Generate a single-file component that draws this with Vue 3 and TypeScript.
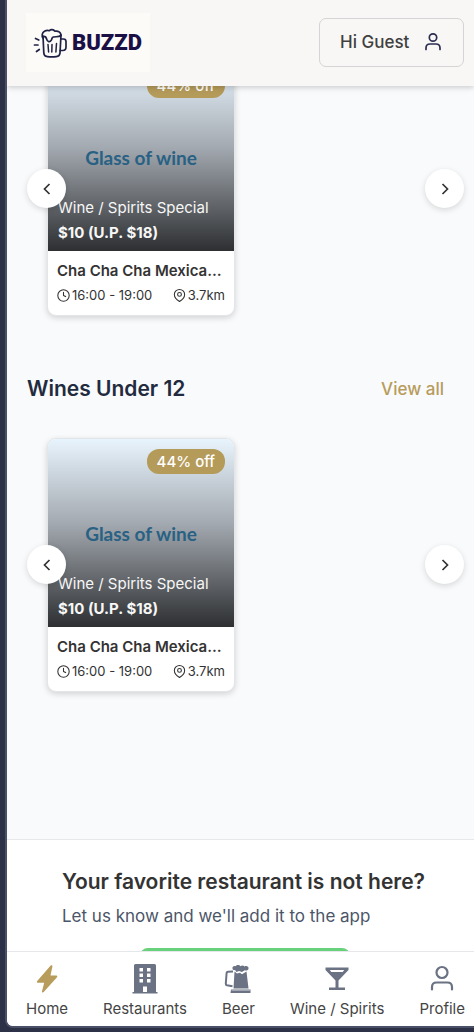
<script setup lang="ts">
interface Offer {
  drink: string
  category: string
  price: string
  discount: string
  venue: string
  hours: string
  distance: string
}

interface Section {
  id: string
  title: string
  offers: Offer[]
}

const wineOffer: Offer = {
  drink: 'Glass of wine',
  category: 'Wine / Spirits Special',
  price: '$10 (U.P. $18)',
  discount: '44% off',
  venue: 'Cha Cha Cha Mexican Restaurant',
  hours: '16:00 - 19:00',
  distance: '3.7km',
}

const sections: Section[] = [
  { id: 'featured', title: '', offers: [wineOffer] },
  { id: 'wines', title: 'Wines Under 12', offers: [wineOffer] },
]

const tabs = [
  { id: 'home', label: 'Home' },
  { id: 'restaurants', label: 'Restaurants' },
  { id: 'beer', label: 'Beer' },
  { id: 'wine', label: 'Wine / Spirits' },
  { id: 'profile', label: 'Profile' },
]
</script>

<template>
  <div class="device">
    <div class="screen">
      <header class="topbar">
        <a class="logo" href="#" aria-label="Buzzd">
          <svg width="36" height="34" viewBox="0 0 36 34" fill="none" stroke="#1f2145" stroke-width="1.700" stroke-linecap="round" stroke-linejoin="round" aria-hidden="true">
            <path d="M10 10 10.800 27c.2 2.500 1.200 3.500 3.500 3.700 3 .3 6 .3 9 0 2.300-.2 3.500-1.200 3.700-3.700L28 9" />
            <path d="M10 12c-1.500-2-1-5.500 1.500-6.800 2-1 3.500-.9 4.800-.5 1.500-1.700 4.200-1.500 5.700.5 3-.6 5.500.6 6 3.800" />
            <path d="M10 10.500c2-.3 3.200.7 3.700 2.700.5 2.800 3.300 3.300 4.600 1 .7-1.300.4-2.700 2-3.200 2.500-.6 5.700.3 7.700-1.500" />
            <path d="M27.800 13h2.700c1.700 0 2.500.9 2.500 2.600v5.400c0 2.300-1.300 3.500-3.300 3.500h-2.500" />
            <path d="M15 18.500l.6 7.500M19 18.500l-.2 7.500M23.500 17.500l-.6 8.500" stroke-width="1.500" />
            <path d="M2.500 12.500l3.300 1.500M1.500 19h3.500M3.500 25.500l2.800-2" stroke-width="1.700" />
          </svg>
          <span class="logo-text">BUZZD</span>
        </a>
        <button class="guest" type="button">
          <span>Hi Guest</span>
          <svg width="18" height="20" viewBox="0 0 18 20" fill="none" stroke="#2b2d50" stroke-width="1.700" aria-hidden="true">
            <circle cx="9" cy="5.500" r="3.700" />
            <path d="M2 17.500v-1.500c0-2.500 1.500-4 4-4h6c2.500 0 4 1.500 4 4v1.500" stroke-linecap="round" />
          </svg>
        </button>
      </header>

      <main class="feed">
        <section v-for="section in sections" :key="section.id" class="section">
          <div v-if="section.title" class="section-head">
            <h2>{{ section.title }}</h2>
            <a href="#">View all</a>
          </div>
          <div class="carousel">
            <article v-for="offer in section.offers" :key="offer.drink" class="card">
              <div class="photo">
                <span class="badge">{{ offer.discount }}</span>
                <strong class="drink">{{ offer.drink }}</strong>
                <div class="caption">
                  <span>{{ offer.category }}</span>
                  <b>{{ offer.price }}</b>
                </div>
              </div>
              <div class="info">
                <h3>{{ offer.venue }}</h3>
                <div class="meta">
                  <span>
                    <svg width="13" height="13" viewBox="0 0 24 24" fill="none" stroke="currentColor" stroke-width="2" stroke-linecap="round" stroke-linejoin="round" aria-hidden="true">
                      <circle cx="12" cy="12" r="10.500" />
                      <path d="M12 6v6l4 2" />
                    </svg>
                    {{ offer.hours }}
                  </span>
                  <span>
                    <svg width="13" height="13" viewBox="0 0 24 24" fill="none" stroke="currentColor" stroke-width="2" stroke-linejoin="round" aria-hidden="true">
                      <path d="M21.500 10c0 7-9.500 13-9.500 13s-9.500-6-9.500-13a9.500 9 0 0 1 19 0z" />
                      <circle cx="12" cy="10" r="3.500" />
                    </svg>
                    {{ offer.distance }}
                  </span>
                </div>
              </div>
            </article>
            <button class="arrow prev" type="button" aria-label="Previous">
              <svg width="16" height="16" viewBox="0 0 16 16" fill="none" stroke="currentColor" stroke-width="1.700" aria-hidden="true"><path d="M10.500 3 5.500 8l5 5" /></svg>
            </button>
            <button class="arrow next" type="button" aria-label="Next">
              <svg width="16" height="16" viewBox="0 0 16 16" fill="none" stroke="currentColor" stroke-width="1.700" aria-hidden="true"><path d="M5.500 3l5 5-5 5" /></svg>
            </button>
          </div>
        </section>

        <section class="suggest">
          <h2>Your favorite restaurant is not here?</h2>
          <p>Let us know and we'll add it to the app</p>
          <button class="suggest-button" type="button" aria-label="Suggest a restaurant"></button>
        </section>
      </main>

      <nav class="tabs">
        <a v-for="tab in tabs" :key="tab.id" href="#" :class="{ active: tab.id === 'home' }">
          <svg v-if="tab.id === 'home'" width="32" height="32" viewBox="0 0 32 32" fill="currentColor" aria-hidden="true">
            <path d="M19.700 2.500 6.200 18c-.6.8-.3 1.800.7 1.800h6.300L11 28.200c-.2 1.200.9 1.700 1.700.8L26 14.200c.6-.8.3-1.700-.7-1.700h-5.800l1.900-9c.2-1.200-.9-1.800-1.700-1z" />
          </svg>
          <svg v-else-if="tab.id === 'restaurants'" width="32" height="32" viewBox="0 0 32 32" fill="currentColor" fill-rule="evenodd" aria-hidden="true">
            <path d="M5 2.500Q5 1 6.500 1h19Q27 1 27 2.500V29h1.500v1.500h-25V29H5zM10.500 5v3.500H14V5zm7.500 0v3.500h3.500V5zm-7.500 5.500V14H14v-3.500zm7.500 0V14h3.500v-3.500zM10.500 16v3.500H14V16zm7.500 0v3.500h3.500V16zm-4 7.500V29h4v-5.500z" />
          </svg>
          <svg v-else-if="tab.id === 'beer'" width="32" height="32" viewBox="0 0 32 32" fill="currentColor" aria-hidden="true">
            <path d="M11 8.500 6 8.700Q4.800 8.800 4.600 10L3.800 20.500q-.1 1.500 1.200 1.800l5.500 1" fill="none" stroke="currentColor" stroke-width="2" />
            <path d="M12.500 8.500 15 10.500l3-.7 2 1.400 4.500-2.700L26.500 25.500h-15z" />
            <path d="M10.500 5.500c-.5-2 1.500-3 3-2.300 1.500-2 4-1.500 5 0 1.500-1.200 3-.8 4 .3 2-1 4.500 0 4 2.300-.3 1.700-2.200 2.200-3.700 1.500L20 9l-3-1-2.500 1L13 7c-1.500.5-2.300-.3-2.500-1.500z" />
            <path d="M9 26.500h19.500V30H8.500z" />
            <path d="M9.500 27h18.500" stroke="#b5b9c3" stroke-width="1.500" />
          </svg>
          <svg v-else-if="tab.id === 'wine'" width="32" height="32" viewBox="0 0 32 32" fill="currentColor" fill-rule="evenodd" aria-hidden="true">
            <path d="M4.500 4.500h23V7l-10 10.500v7H24V27H8v-2.500h6.500v-7L4.500 7zm4.300 2.500L10.300 9h11.400l1.500-2z" />
          </svg>
          <svg v-else width="32" height="32" viewBox="0 0 32 32" fill="none" stroke="currentColor" stroke-width="2.200" stroke-linecap="round" aria-hidden="true">
            <circle cx="16" cy="9.500" r="5.500" />
            <path d="M6 26.500V24q0-4.500 4.500-4.500h11Q26 19.500 26 24v2.500" />
          </svg>
          <span>{{ tab.label }}</span>
        </a>
      </nav>
    </div>
  </div>
</template>

<style>
body {
  margin: 0;
  background: #2c3148;
}
</style>

<style scoped>
* {
  box-sizing: border-box;
}

h2,
h3,
p {
  margin: 0;
}

a {
  text-decoration: none;
}

button {
  font: inherit;
  padding: 0;
  cursor: pointer;
}

.device {
  height: 100vh;
  padding: 0 0 4px 5px;
  background: #2c3148;
  color: #333333;
  font-family: Inter, "Liberation Sans", sans-serif;
}

.screen {
  height: 100%;
  display: flex;
  flex-direction: column;
  overflow: hidden;
  border: solid #4a5066;
  border-width: 0 0 2px 2px;
  border-radius: 0 0 0 8px;
  background: #f9fafc;
}

.topbar {
  z-index: 2;
  flex: none;
  display: flex;
  align-items: center;
  justify-content: space-between;
  padding: 13px 10px 14px 19px;
  background: #f8f7f5;
  box-shadow: 0 1px 6px rgba(0, 0, 0, 0.22);
}

.logo {
  display: flex;
  align-items: center;
  gap: 3px;
  width: 124px;
  height: 59px;
  padding-left: 7px;
  background: #fcfbf8;
}

.logo-text {
  color: #1b1046;
  font-family: "Liberation Sans Narrow", Roboto, sans-serif;
  font-size: 22px;
  font-weight: 900;
}

.guest {
  display: flex;
  align-items: center;
  justify-content: space-between;
  width: 145px;
  height: 49px;
  padding: 0 21px 2px 20px;
  border: 1px solid #d5d4d6;
  border-radius: 7px;
  background: transparent;
  color: #404040;
  font-size: 17px;
  font-weight: 500;
}

.feed {
  flex: 1;
  min-height: 0;
  overflow: hidden;
}

.section {
  padding: 0 10px 0 20px;
}

.section:first-child {
  margin-top: -24px;
}

.section-head {
  display: flex;
  align-items: center;
  justify-content: space-between;
  padding: 57px 20px 33px 0;
  line-height: 32px;
}

.section-head h2 {
  color: #222b3e;
  font-size: 21px;
  font-weight: 600;
}

.section-head a {
  color: #b79c5b;
  font-size: 17px;
  font-weight: 500;
}

.carousel {
  position: relative;
  display: flex;
  padding: 0 20px;
}

.card {
  width: 188px;
  overflow: hidden;
  border: 1px solid #e4e5e7;
  border-radius: 9px;
  background: #ffffff;
  box-shadow: 0 2px 6px rgba(0, 0, 0, 0.16);
}

.photo {
  position: relative;
  display: flex;
  align-items: center;
  justify-content: center;
  height: 188px;
  background: linear-gradient(#e8f4fd, #a3a9b0 45%, #2d2f31);
}

.badge {
  position: absolute;
  top: 10px;
  right: 9px;
  padding: 0 10px;
  border-radius: 12px;
  background: #b59b5a;
  color: #ffffff;
  font-size: 15px;
  font-weight: 500;
  line-height: 25px;
}

.drink {
  color: #286184;
  font-family: Lato, sans-serif;
  font-size: 19px;
  font-weight: 700;
}

.caption {
  position: absolute;
  bottom: 6px;
  left: 10px;
  display: grid;
  color: #f7f7f7;
  font-size: 15px;
  line-height: 25px;
  white-space: nowrap;
}

.caption b {
  font-weight: 700;
}

.info {
  padding: 9px 9px 11px 9px;
}

.info h3 {
  overflow: hidden;
  font-size: 15px;
  font-weight: 600;
  line-height: 22px;
  text-overflow: ellipsis;
  white-space: nowrap;
}

.meta {
  display: flex;
  justify-content: space-between;
  padding-top: 4px;
  font-size: 13px;
  line-height: 18px;
}

.meta span {
  display: flex;
  align-items: center;
  gap: 2px;
}

.arrow {
  position: absolute;
  top: calc(50% - 20px);
  display: grid;
  place-items: center;
  width: 39px;
  height: 39px;
  border: 0;
  border-radius: 50%;
  background: #ffffff;
  color: #333333;
  box-shadow: 0 2px 6px rgba(0, 0, 0, 0.14);
}

.prev {
  left: 0;
}

.next {
  right: 0;
}

.suggest {
  margin-top: 147px;
  padding: 26px 20px 40px 55px;
  border-top: 1px solid #e5e7eb;
  background: #ffffff;
}

.suggest h2 {
  font-size: 21px;
  font-weight: 600;
  line-height: 32px;
  white-space: nowrap;
}

.suggest p {
  padding-top: 6px;
  color: #4b5568;
  font-size: 17px;
  line-height: 24px;
}

.suggest-button {
  display: block;
  width: 210px;
  height: 48px;
  margin: 20px 0 0 78px;
  border: 0;
  border-radius: 8px;
  background: #68d17c;
}

.tabs {
  z-index: 2;
  flex: none;
  display: flex;
  justify-content: space-between;
  padding: 11px 9px 7px 19px;
  border-top: 1px solid #e5e7eb;
  background: #ffffff;
}

.tabs a {
  display: flex;
  flex-direction: column;
  align-items: center;
  gap: 4px;
  color: #6b7283;
}

.tabs a.active {
  color: #b79c5b;
}

.tabs span {
  color: #454545;
  font-size: 15px;
  line-height: 20px;
}
</style>
